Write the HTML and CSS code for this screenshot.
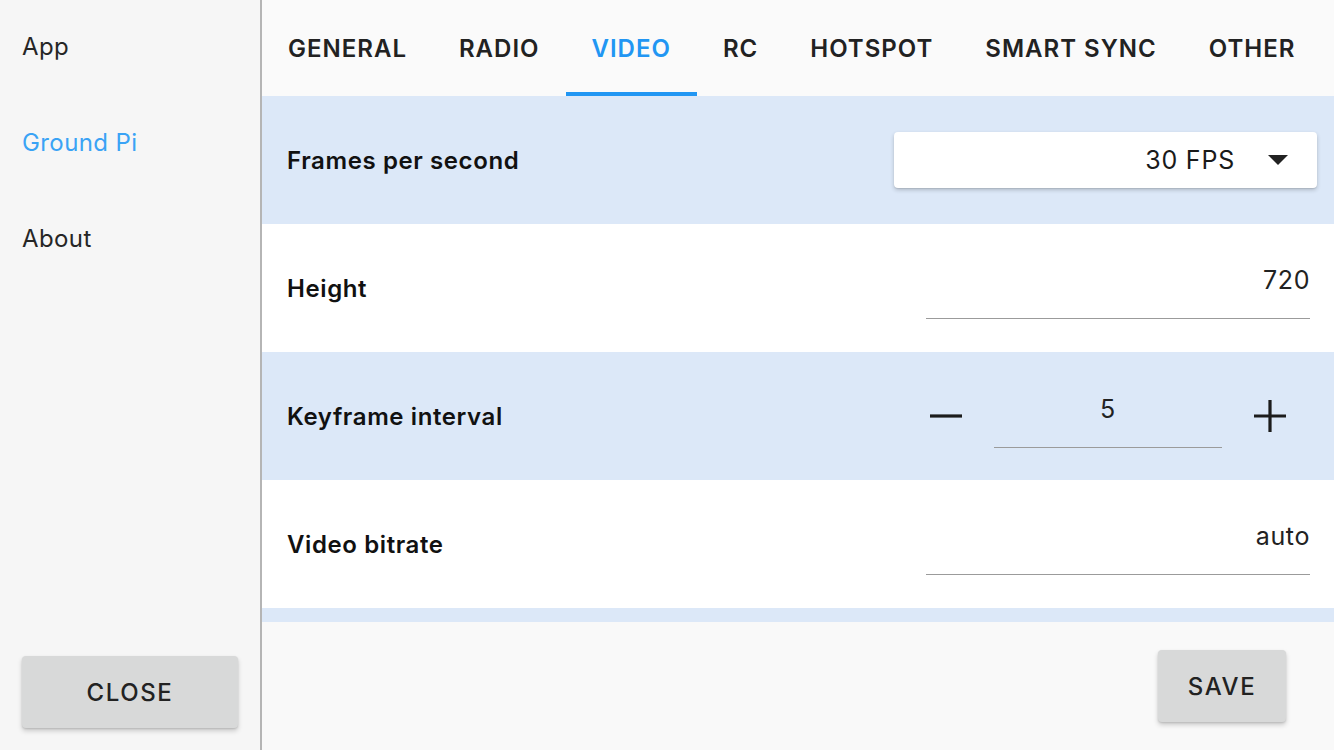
FILE: index.html
```html
<!DOCTYPE html>
<html lang="en">
<head>
<meta charset="utf-8">
<title>Settings</title>
<link rel="stylesheet" href="styles.css">
</head>
<body>
<div class="app">
  <aside class="sidebar">
    <nav class="menu">
      <div class="menu-item">App</div>
      <div class="menu-item active">Ground Pi</div>
      <div class="menu-item">About</div>
    </nav>
    <button class="btn btn-close">CLOSE</button>
  </aside>
  <main class="main">
    <div class="tabs">
      <div class="tab">GENERAL</div>
      <div class="tab">RADIO</div>
      <div class="tab active">VIDEO</div>
      <div class="tab">RC</div>
      <div class="tab">HOTSPOT</div>
      <div class="tab">SMART SYNC</div>
      <div class="tab">OTHER</div>
    </div>
    <div class="list">
      <div class="row alt">
        <div class="label">Frames per second</div>
        <div class="select">
          <span class="select-value">30 FPS</span>
          <svg class="select-arrow" width="20" height="10" viewBox="0 0 20 10"><path d="M0 0 L20 0 L10 10 Z" fill="#222"/></svg>
        </div>
      </div>
      <div class="row">
        <div class="label">Height</div>
        <div class="field"><span class="field-value">720</span></div>
      </div>
      <div class="row alt">
        <div class="label">Keyframe interval</div>
        <div class="stepper">
          <div class="icon-btn">
            <svg width="32" height="32" viewBox="0 0 32 32"><path d="M0 16 H32" stroke="#1c1c1c" stroke-width="3.2"/></svg>
          </div>
          <div class="field field-small"><span class="field-value centered">5</span></div>
          <div class="icon-btn">
            <svg width="32" height="32" viewBox="0 0 32 32"><path d="M0 16 H32 M16 0 V32" stroke="#1c1c1c" stroke-width="3.2"/></svg>
          </div>
        </div>
      </div>
      <div class="row">
        <div class="label">Video bitrate</div>
        <div class="field"><span class="field-value">auto</span></div>
      </div>
      <div class="row alt"></div>
    </div>
    <div class="footer">
      <button class="btn btn-save">SAVE</button>
    </div>
  </main>
</div>
</body>
</html>
```
FILE: styles.css
```css
* { box-sizing: border-box; }
html, body { margin: 0; padding: 0; }
body {
  font-family: Inter, "Noto Sans", "Liberation Sans", sans-serif;
  color: #1a1a1a;
  width: 1334px;
  height: 750px;
  overflow: hidden;
}
.app {
  display: flex;
  height: 750px;
}
.sidebar {
  width: 262px;
  flex: none;
  background: #f6f6f6;
  border-right: 2px solid #b5b5b5;
  display: flex;
  flex-direction: column;
  justify-content: space-between;
}
.menu {
  display: flex;
  flex-direction: column;
}
.menu-item {
  height: 96px;
  padding: 0 22px 4px;
  display: flex;
  align-items: center;
  font-size: 24px;
  letter-spacing: 0.4px;
  color: #262626;
}
.menu-item.active { color: #3aa3f5; }
.btn {
  font-family: inherit;
  border: none;
  background: #d8d9d9;
  border-radius: 4px;
  box-shadow: 0 3px 5px rgba(0,0,0,0.18), 0 1px 2px rgba(0,0,0,0.12);
  font-size: 24px;
  font-weight: 500;
  letter-spacing: 1.6px;
  color: #222;
  height: 72px;
}
.btn-close {
  width: 216px;
  margin: 0 22px 22px;
}
.btn-save {
  width: 128px;
}
.main {
  flex: 1;
  display: flex;
  flex-direction: column;
  min-width: 0;
}
.tabs {
  height: 96px;
  flex: none;
  background: #fafafa;
  display: flex;
}
.tab {
  padding: 4px 26px 0;
  display: flex;
  align-items: center;
  font-size: 24px;
  font-weight: 600;
  color: #222;
  letter-spacing: 1px;
  border-bottom: 4px solid transparent;
}
.tab.active {
  color: #2196f3;
  border-bottom-color: #2196f3;
}
.list {
  flex: 1;
  overflow: hidden;
  background: #ffffff;
}
.row {
  height: 128px;
  display: flex;
  align-items: center;
  justify-content: space-between;
  padding: 0 24px 0 25px;
  background: #ffffff;
}
.row.alt { background: #dce8f8; }
.label {
  font-size: 24px;
  font-weight: 600;
  letter-spacing: 0.6px;
  color: #111;
}
.select {
  width: 423px;
  height: 56px;
  margin-right: -7px;
  background: #fff;
  border-radius: 4px;
  box-shadow: 0 2px 4px rgba(0,0,0,0.2), 0 1px 1px rgba(0,0,0,0.08);
  display: flex;
  align-items: center;
  justify-content: flex-end;
  padding-right: 29px;
  gap: 33px;
}
.select-value {
  font-size: 25px;
  letter-spacing: 0.8px;
  color: #1a1a1a;
}
.select-arrow { display: block; }
.field {
  width: 384px;
  border-bottom: 1px solid #9b9b9b;
  padding-bottom: 24px;
  margin-top: 9px;
  display: flex;
  justify-content: flex-end;
}
.field-value {
  line-height: 28px;
  font-size: 25px;
  letter-spacing: 0.6px;
  color: #222;
}
.field-small {
  width: 228px;
  justify-content: center;
  margin-top: 11px;
}
.stepper {
  display: flex;
  align-items: center;
  gap: 24px;
  margin-right: 16px;
}
.icon-btn {
  width: 48px;
  height: 48px;
  display: flex;
  align-items: center;
  justify-content: center;
}
.icon-btn svg { display: block; }
.footer {
  height: 128px;
  flex: none;
  background: #f9f9f9;
  display: flex;
  align-items: center;
  justify-content: flex-end;
  padding-right: 48px;
}
```
